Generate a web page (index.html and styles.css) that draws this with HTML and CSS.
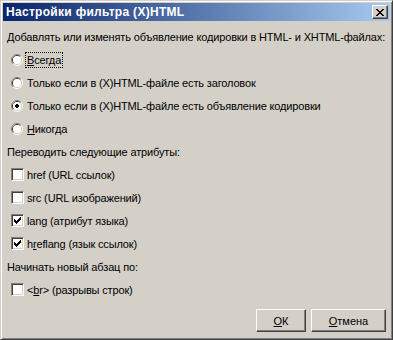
FILE: index.html
```html
<!DOCTYPE html>
<html lang="ru">
<head>
  <meta charset="UTF-8">
  <title>Настройки фильтра (X)HTML</title>
  <link rel="stylesheet" href="styles.css">
</head>
<body>

  <div class="window">
    <div class="titlebar">
      <span class="title">Настройки фильтра (X)HTML</span>
      <button class="close">
        <svg width="8" height="7" viewBox="0 0 8 7">
          <path d="M0 0h2v1h-2z M6 0h2v1h-2z M1 1h2v1h-2z M5 1h2v1h-2z M2 2h4v1h-4z M3 3h2v1h-2z M2 4h4v1h-4z M1 5h2v1h-2z M5 5h2v1h-2z M0 6h2v1h-2z M6 6h2v1h-2z" fill="#000"/>
        </svg>
      </button>
    </div>

    <div class="content">
      <div class="row">Добавлять или изменять объявление кодировки в HTML- и XHTML-файлах:</div>

      <div class="row opt">
        <span class="radio"></span>
        <span class="label focus"><u>В</u>сегда</span>
      </div>
      <div class="row opt">
        <span class="radio"></span>
        <span class="label">Только если в (X)HTML-файле есть заголовок</span>
      </div>
      <div class="row opt">
        <span class="radio checked"></span>
        <span class="label">Только если в (X)HTML-файле есть объявление кодировки</span>
      </div>
      <div class="row opt">
        <span class="radio"></span>
        <span class="label"><u>Н</u>икогда</span>
      </div>

      <div class="row">Переводить следующие атрибуты:</div>

      <div class="row opt">
        <span class="check"></span>
        <span class="label">href (URL ссылок)</span>
      </div>
      <div class="row opt">
        <span class="check"></span>
        <span class="label">src (URL изображений)</span>
      </div>
      <div class="row opt">
        <span class="check checked"></span>
        <span class="label">lan<u>g</u> (атрибут языка)</span>
      </div>
      <div class="row opt">
        <span class="check checked"></span>
        <span class="label">h<u>r</u>eflang (язык ссылок)</span>
      </div>

      <div class="row">Начинать новый абзац по:</div>

      <div class="row opt">
        <span class="check"></span>
        <span class="label">&lt;<u>b</u>r&gt; (разрывы строк)</span>
      </div>

      <div class="buttons">
        <button class="btn ok"><u>О</u>К</button>
        <button class="btn cancel"><u>О</u>тмена</button>
      </div>
    </div>
  </div>

  <script>
    // fill the radio and check boxes with their glyphs
    var radioSvg = '<svg width="12" height="12" viewBox="0 0 12 12">' +
      '<path d="M2.11 9.89 A5.5 5.5 0 0 1 9.89 2.11" fill="none" stroke="#808080"/>' +
      '<path d="M9.89 2.11 A5.5 5.5 0 0 1 2.11 9.89" fill="none" stroke="#fff"/>' +
      '<path d="M2.82 9.18 A4.5 4.5 0 0 1 9.18 2.82" fill="none" stroke="#404040"/>' +
      '<path d="M9.18 2.82 A4.5 4.5 0 0 1 2.82 9.18" fill="none" stroke="#d4d0c8"/>' +
      '<circle cx="6" cy="6" r="4" fill="#fff"/>' +
      '</svg>';
    var dotSvg = '<path d="M5 4h2v1h1v2h-1v1h-2v-1h-1v-2h1z" fill="#000"/>';
    var tickSvg = '<svg width="9" height="9" viewBox="0 0 9 9"><path d="M1 3h1v3H1z M2 4h1v3H2z M3 5h1v3H3z M4 4h1v3H4z M5 3h1v3H5z M6 2h1v3H6z M7 1h1v3H7z" fill="#000"/></svg>';

    document.querySelectorAll('.radio').forEach(function (el) {
      var svg = radioSvg;
      if (el.classList.contains('checked')) {
        svg = svg.replace('</svg>', dotSvg + '</svg>');
      }
      el.innerHTML = svg;
    });

    document.querySelectorAll('.check.checked').forEach(function (el) {
      el.innerHTML = tickSvg;
    });
  </script>

</body>
</html>
```

FILE: styles.css
```css
body {
  margin: 0;
  padding: 0;
  background-color: #d4d0c8;
  font-family: "Liberation Sans", Arial, sans-serif;
  font-size: 11px;
  letter-spacing: -0.15px;
  color: #000;
}

.window {
  width: 393px;
  height: 340px;
  box-sizing: border-box;
  background-color: #d4d0c8;
  border: 1px solid;
  border-color: #d4d0c8 #404040 #404040 #d4d0c8;
  box-shadow: inset 1px 1px #fff, inset -1px -1px #808080;
  padding: 2px;
}

.titlebar {
  height: 18px;
  display: flex;
  align-items: center;
  justify-content: space-between;
  padding: 0 2px 0 3px;
  background: linear-gradient(to right, #0a246a, #a6caf0);
}

.title {
  color: #fff;
  font-weight: bold;
  font-size: 12px;
  letter-spacing: 0.3px;
}

.close {
  width: 16px;
  height: 14px;
  box-sizing: border-box;
  padding: 0;
  margin: 0;
  display: flex;
  align-items: center;
  justify-content: center;
  background-color: #d4d0c8;
  border: 1px solid;
  border-color: #fff #404040 #404040 #fff;
  box-shadow: inset -1px -1px #808080;
}

.content {
  padding: 4px 4px 0 4px;
}

.row {
  height: 23px;
  display: flex;
  align-items: center;
  white-space: nowrap;
}

.opt {
  padding-left: 4px;
}

.radio {
  width: 12px;
  height: 12px;
  display: inline-block;
  margin-right: 2px;
}

.radio svg {
  display: block;
}

.check {
  width: 13px;
  height: 13px;
  box-sizing: border-box;
  display: inline-block;
  margin-right: 1px;
  background-color: #fff;
  border: 1px solid;
  border-color: #808080 #fff #fff #808080;
  box-shadow: inset 1px 1px #404040, inset -1px -1px #d4d0c8;
  padding: 1px;
}

.check svg {
  display: block;
}

.label {
  padding: 1px;
  border: 1px solid transparent;
}

.label.focus {
  border: 1px dotted #000;
}

u {
  text-decoration: underline;
}

.buttons {
  display: flex;
  justify-content: flex-end;
  gap: 5px;
  margin-top: 8px;
  padding-right: 0;
}

.btn {
  height: 23px;
  box-sizing: border-box;
  padding: 0;
  font-family: "Liberation Sans", Arial, sans-serif;
  font-size: 11px;
  color: #000;
  background-color: #d4d0c8;
  border: 1px solid;
  border-color: #fff #404040 #404040 #fff;
  box-shadow: inset -1px -1px #808080;
}

.ok {
  width: 50px;
}

.cancel {
  width: 75px;
}
```
